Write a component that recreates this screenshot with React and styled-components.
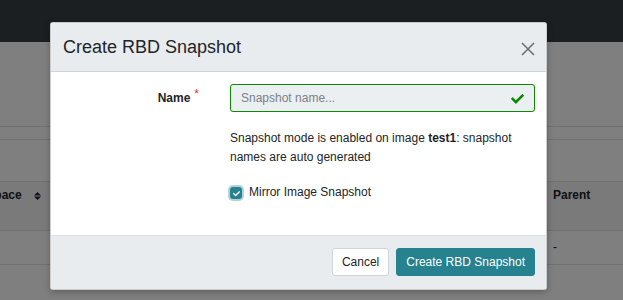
import React from "react";
import styled, { createGlobalStyle } from "styled-components";

const GlobalStyle = createGlobalStyle`
  html, body {
    margin: 0;
    padding: 0;
    height: 300px;
    overflow: hidden;
    font-family: "Liberation Sans", Arial, sans-serif;
    font-size: 12px;
    color: #212529;
    background: #fff;
  }
`;

const Page = styled.div`
  position: relative;
  width: 623px;
  height: 300px;
  overflow: hidden;
`;

const Navbar = styled.div`
  height: 42px;
  background: #383f45;
`;

const Band = styled.div`
  height: ${(p) => p.h}px;
  border-bottom: 1px solid #dee2e6;
`;

const TableWrap = styled.div`
  overflow: hidden;
`;

// the table is scrolled sideways, so its first column is partly hidden
const Row = styled.div`
  display: flex;
  height: ${(p) => p.h}px;
  border-bottom: 1px solid #dee2e6;
  background: ${(p) => (p.head ? "#f4f5f6" : "#fff")};
  margin-left: -53px;
`;

const Cell = styled.div`
  width: ${(p) => p.w}px;
  flex: none;
  display: flex;
  align-items: flex-start;
  gap: 12px;
  padding: ${(p) => (p.head ? "4px 8px 0 8px" : "7px 8px 0 8px")};
  box-sizing: border-box;
  font-weight: ${(p) => (p.head ? 700 : 400)};
  font-size: 12px;
  line-height: 18px;
  white-space: nowrap;
`;

const SortIcon = styled.svg`
  width: 7px;
  height: 8px;
  margin-top: 6px;
  fill: #212529;
  flex: none;
`;

const Backdrop = styled.div`
  position: absolute;
  inset: 0;
  background: rgba(0, 0, 0, 0.5);
  display: flex;
  align-items: flex-start;
  padding: 22px 0 0 50px;
  box-sizing: border-box;
`;

const Modal = styled.div`
  width: 497px;
  box-sizing: border-box;
  background: #fff;
  border: 1px solid rgba(0, 0, 0, 0.2);
  border-radius: 3px;
  overflow: hidden;
  box-shadow: 0 2px 6px rgba(0, 0, 0, 0.25);
`;

const Header = styled.div`
  display: flex;
  align-items: center;
  justify-content: space-between;
  padding: 11px 10px 10px 12px;
  background: #e9ecef;
  border-bottom: 1px solid #ced4da;
`;

const Title = styled.h4`
  margin: 0;
  font-weight: 400;
  font-size: 18px;
  line-height: 27px;
  color: #212529;
`;

const Close = styled.button`
  border: 0;
  background: none;
  padding: 0;
  width: 16px;
  height: 16px;
  margin-top: 2px;
  display: flex;
  align-items: center;
  justify-content: center;
  svg {
    stroke: #6f6f6f;
    stroke-width: 1.6;
  }
`;

const Body = styled.div`
  padding: 12px 11px 34px 11px;
`;

const FormRow = styled.div`
  display: grid;
  grid-template-columns: 138px 1fr;
  column-gap: 30px;
  margin-bottom: ${(p) => p.mb || 0}px;
`;

const Label = styled.label`
  text-align: right;
  font-weight: 700;
  line-height: 29px;
  padding-right: 1px;
`;

const Required = styled.span`
  color: #dc3545;
  font-weight: 400;
  font-size: 12px;
  vertical-align: top;
  line-height: 20px;
  margin-left: 4px;
`;

const InputBox = styled.div`
  display: flex;
  align-items: center;
  height: 28px;
  box-sizing: border-box;
  border: 1px solid #0b8a00;
  border-radius: 3px;
  background: #eceff1;
  padding: 0 10px;
  input {
    flex: 1;
    border: 0;
    background: transparent;
    font: inherit;
    font-size: 12px;
    color: #212529;
    outline: none;
    padding: 0;
    &::placeholder {
      color: #7a828a;
    }
  }
  svg {
    width: 13px;
    height: 11px;
    fill: #0b8a00;
  }
`;

const Help = styled.p`
  margin: 0;
  line-height: 19px;
  font-size: 12px;
`;

const CheckRow = styled.label`
  display: flex;
  align-items: center;
  gap: 7px;
  line-height: 18px;
  margin-top: 16px;
`;

const Box = styled.span`
  width: 12px;
  height: 12px;
  border-radius: 3px;
  background: #25828e;
  box-shadow: 0 0 0 2px rgba(37, 130, 142, 0.35);
  display: flex;
  align-items: center;
  justify-content: center;
  margin-top: 2px;
  svg {
    width: 7px;
    height: 7px;
    fill: #fff;
  }
`;

const Footer = styled.div`
  display: flex;
  justify-content: flex-end;
  gap: 7px;
  padding: 12px 11px 13px 12px;
  background: #e9ecef;
  border-top: 1px solid #dee2e6;
`;

const Button = styled.button`
  font-family: inherit;
  font-size: 12px;
  line-height: 18px;
  height: 28px;
  padding: 0 9px;
  border-radius: 3px;
  border: 1px solid ${(p) => (p.primary ? "#25828e" : "#ced4da")};
  background: ${(p) => (p.primary ? "#25828e" : "#fff")};
  color: ${(p) => (p.primary ? "#fff" : "#212529")};
`;

const CheckPath = () => (
  <path d="M173.9 410.5 7.5 244.1c-10-10-10-26.2 0-36.2l36.2-36.2c10-10 26.2-10 36.2 0L192 283.8 432.1 43.7c10-10 26.2-10 36.2 0l36.2 36.2c10 10 10 26.2 0 36.2L210.1 410.5c-10 10-26.2 10-36.2 0z" />
);

const App = () => (
  <Page>
    <GlobalStyle />
    <Navbar />
    <Band h={84} />
    <Band h={12} />
    <Band h={41} />
    <TableWrap>
      <Row head h={48}>
        <Cell head w={95}>
          <span>Namespace</span>
          <SortIcon viewBox="0 0 7 8">
            <path d="M3.5 0 7 3.4H0z M3.5 8 0 4.6h7z" />
          </SortIcon>
        </Cell>
        <Cell w={503} />
        <Cell head w={80}>Parent</Cell>
      </Row>
      <Row h={33}>
        <Cell w={95} />
        <Cell w={503} />
        <Cell w={80}>-</Cell>
      </Row>
    </TableWrap>
    <Backdrop>
      <Modal>
        <Header>
          <Title>Create RBD Snapshot</Title>
          <Close aria-label="Close">
            <svg width="14" height="14" viewBox="0 0 14 14">
              <path d="M1 1 13 13 M13 1 1 13" />
            </svg>
          </Close>
        </Header>
        <Body>
          <FormRow mb={16}>
            <Label>
              Name<Required>*</Required>
            </Label>
            <InputBox>
              <input placeholder="Snapshot name..." />
              <svg viewBox="0 0 512 420">
                <CheckPath />
              </svg>
            </InputBox>
          </FormRow>
          <FormRow>
            <span />
            <div>
              <Help>
                Snapshot mode is enabled on image <b>test1</b>: snapshot names
                are auto generated
              </Help>
              <CheckRow>
                <Box>
                  <svg viewBox="0 0 512 420">
                    <CheckPath />
                  </svg>
                </Box>
                Mirror Image Snapshot
              </CheckRow>
            </div>
          </FormRow>
        </Body>
        <Footer>
          <Button>Cancel</Button>
          <Button primary>Create RBD Snapshot</Button>
        </Footer>
      </Modal>
    </Backdrop>
  </Page>
);

export default App;
